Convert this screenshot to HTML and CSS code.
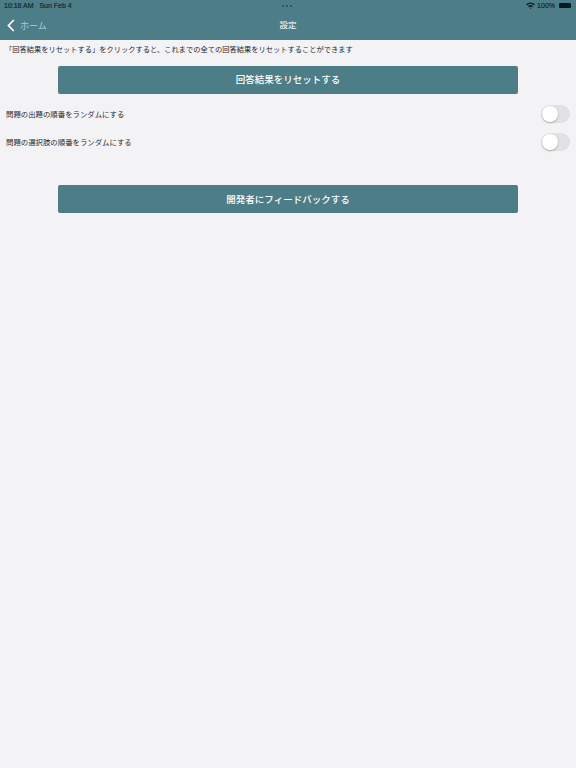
FILE: index.html
```html
<!DOCTYPE html>
<html lang="ja">
<head>
    <meta charset="UTF-8">
    <meta name="viewport" content="width=device-width, initial-scale=1.0">
    <title>設定</title>
    <link rel="stylesheet" href="styles.css">
</head>
<body>
    <header class="top-bar">
        <div class="status-bar">
            <span class="status-time">10:18 AM&nbsp;&nbsp;&nbsp;Sun Feb 4</span>
            <span class="status-dots"><i></i><i></i><i></i></span>
            <span class="status-right">
                <svg class="wifi" width="9" height="7" viewBox="0 0 18 14">
                    <path d="M0 4.5 A13 13 0 0 1 18 4.5 L15.8 6.8 A10 10 0 0 0 2.2 6.8 Z" />
                    <path d="M3.8 8.4 A7.6 7.6 0 0 1 14.2 8.4 L12 10.6 A4.6 4.6 0 0 0 6 10.6 Z" />
                    <path d="M7.4 12 A2.6 2.6 0 0 1 10.6 12 L9 14 Z" />
                </svg>
                <span>100%</span>
                <span class="battery"></span>
            </span>
        </div>
        <nav class="nav-bar">
            <a class="back-link">
                <svg width="8" height="13" viewBox="0 0 8 13">
                    <path d="M6.8 1 L1.5 6.5 L6.8 12" fill="none" stroke="#fff" stroke-width="1.8" />
                </svg>
                <span>ホーム</span>
            </a>
            <div class="nav-title">設定</div>
        </nav>
    </header>

    <main class="content">
        <p class="reset-note">「回答結果をリセットする」をクリックすると、これまでの全ての回答結果をリセットすることができます</p>
        <button class="action-button">回答結果をリセットする</button>
        <div class="option-row">
            <span class="option-label">問題の出題の順番をランダムにする</span>
            <span class="switch"></span>
        </div>
        <div class="option-row">
            <span class="option-label">問題の選択肢の順番をランダムにする</span>
            <span class="switch"></span>
        </div>
        <button class="action-button feedback">開発者にフィードバックする</button>
    </main>
</body>
</html>
```

FILE: styles.css
```css
body {
    margin: 0;
    height: 768px;
    overflow: hidden;
    background-color: #f3f3f5;
    font-family: "Noto Sans CJK JP", "Noto Sans", sans-serif;
    color: #2a2a2a;
}

.top-bar {
    height: 40px;
    background-color: #4d7d87;
}

.status-bar {
    position: relative;
    height: 11px;
    padding: 0 5px 0 4px;
    display: flex;
    justify-content: space-between;
    align-items: center;
    font-family: "Liberation Sans", sans-serif;
    font-size: 7px;
    -webkit-text-stroke: 0.15px #10242c;
    color: #10242c;
}

.status-dots {
    position: absolute;
    left: 282px;
    top: 5px;
    display: flex;
    gap: 2px;
}

.status-dots i {
    width: 2px;
    height: 2px;
    border-radius: 50%;
    background-color: #2c4a54;
}

.status-right {
    display: flex;
    align-items: center;
    gap: 2px;
}

.wifi {
    fill: #10242c;
}

.battery {
    width: 12px;
    height: 5px;
    margin-left: 2px;
    border-radius: 1px;
    background-color: #0b1a20;
}

.nav-bar {
    position: relative;
    height: 29px;
    display: flex;
    align-items: center;
    justify-content: center;
}

.back-link {
    position: absolute;
    left: 7px;
    top: 8px;
    display: flex;
    align-items: center;
    gap: 5px;
    font-size: 9px;
    color: #a9d0d6;
}

.nav-title {
    margin-top: -3px;
    font-size: 8.5px;
    color: #fff;
}

.content {
    display: flex;
    flex-direction: column;
}

.reset-note {
    margin: 2px 0 0 5px;
    height: 14px;
    line-height: 14px;
    font-size: 7.25px;
    white-space: nowrap;
}

.action-button {
    display: block;
    width: 460px;
    height: 28px;
    margin: 10px 0 0 58px;
    padding: 0 0 2px;
    border: none;
    border-radius: 2px;
    background-color: #4d7d87;
    color: #fff;
    font-family: inherit;
    font-size: 9.5px;
    font-weight: 500;
}

.option-row {
    height: 28px;
    padding: 0 6px;
    display: flex;
    justify-content: space-between;
    align-items: center;
    font-size: 7.4px;
}

.option-label {
    margin-top: -2px;
}

.action-button + .option-row {
    margin-top: 6px;
}

.switch {
    position: relative;
    width: 29px;
    height: 18px;
    border-radius: 9px;
    background-color: #e1e1e4;
}

.switch::after {
    content: "";
    position: absolute;
    left: 1px;
    top: 1px;
    width: 16px;
    height: 16px;
    border-radius: 50%;
    background-color: #fff;
    box-shadow: 0 1px 2px rgba(0, 0, 0, 0.25);
}

.action-button.feedback {
    margin-top: 29px;
    padding-bottom: 1px;
}
```
